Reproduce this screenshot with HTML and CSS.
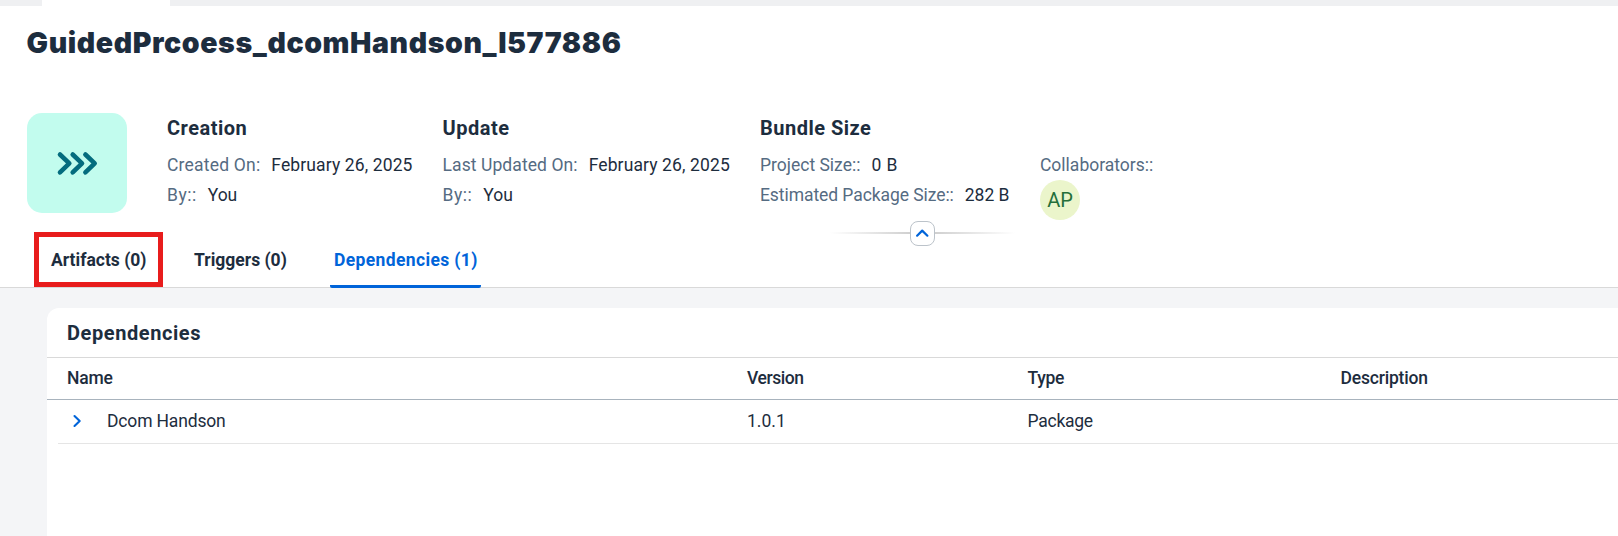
FILE: index.html
```
<!DOCTYPE html>
<html lang="en">
<head>
<meta charset="utf-8">
<title>GuidedPrcoess_dcomHandson_I577886</title>
<link rel="stylesheet" href="styles.css">
</head>
<body>
<div class="top-strip"><div class="top-tab"></div></div>
<header class="page-header">
  <h1 class="title">GuidedPrcoess_dcomHandson_I577886</h1>
  <div class="summary">
    <div class="project-icon">
      <svg width="100" height="100" viewBox="0 0 100 100" fill="none" stroke="#046c7e" stroke-width="4.6" stroke-linecap="round" stroke-linejoin="round"><path d="M33 41.5 42.3 50.3 33 59.3M45.7 41.5 55 50.3 45.7 59.3M58.4 41.5 67.7 50.3 58.4 59.3"/></svg>
    </div>
    <section class="facts creation">
      <h2>Creation</h2>
      <p><span class="label created">Created On:</span><span class="date">February 26, 2025</span></p>
      <p><span class="label by">By::</span><span>You</span></p>
    </section>
    <section class="facts update">
      <h2>Update</h2>
      <p><span class="label updated">Last Updated On:</span><span class="date">February 26, 2025</span></p>
      <p><span class="label by">By::</span><span>You</span></p>
    </section>
    <section class="facts size">
      <h2>Bundle Size</h2>
      <p><span class="label">Project Size::</span><span class="bytes">0 B</span></p>
      <p><span class="label estimate">Estimated Package Size::</span><span>282 B</span></p>
    </section>
    <section class="facts people">
      <p><span class="label">Collaborators::</span></p>
      <div class="avatar">AP</div>
    </section>
  </div>
  <nav class="tabs">
    <a class="tab marked">Artifacts (0)</a>
    <a class="tab triggers">Triggers (0)</a>
    <a class="tab active">Dependencies (1)</a>
  </nav>
  <div class="collapse">
    <span class="ray left"></span>
    <button class="collapse-button" aria-label="Collapse header"><svg width="23" height="23" viewBox="0 0 23 23" fill="none" stroke="#0064d9" stroke-width="2.2" stroke-linecap="round" stroke-linejoin="round"><path d="M6.1 13.7 11.2 8.6 16.4 13.7"/></svg></button>
    <span class="ray right"></span>
  </div>
</header>
<main class="content">
  <section class="card">
    <h2 class="card-title">Dependencies</h2>
    <div class="row head"><span>Name</span><span class="version">Version</span><span class="type">Type</span><span>Description</span></div>
    <div class="row item">
      <span class="name"><svg width="10" height="14" viewBox="0 0 10 14" fill="none" stroke="#0064d9" stroke-width="2.1" stroke-linecap="round" stroke-linejoin="round"><path d="M1.5 2 6.7 7 1.5 12"/></svg><span>Dcom Handson</span></span>
      <span>1.0.1</span><span class="package">Package</span><span></span>
    </div>
  </section>
</main>
</body>
</html>
```
FILE: styles.css
```
* { box-sizing: border-box; }
body { margin: 0; height: 536px; overflow: hidden; display: flex; flex-direction: column; background: #fff; color: #1d2d3e; font-family: Roboto, "Liberation Sans", sans-serif; font-size: 17.5px; }
h1, h2, p { margin: 0; }
.top-strip { height: 6px; flex: none; padding-left: 42px; background: #eff0f2; }
.top-tab { width: 128px; height: 6px; background: #fff; }
.page-header { position: relative; flex: none; height: 282px; display: flex; flex-direction: column; border-bottom: 1px solid #d9d9d9; }
.title { padding: 19px 0 0 26.6px; height: 107px; font: 900 28.5px/36px Inter, sans-serif; letter-spacing: 0.59px; white-space: nowrap; }
.summary { display: flex; height: 119px; padding-left: 27px; white-space: nowrap; }
.project-icon { flex: none; width: 100px; height: 100px; border-radius: 15px; background: #c2fcee; }
.facts { flex: none; }
.facts h2 { height: 37px; font-size: 20px; line-height: 30px; font-weight: 700; letter-spacing: 0.5px; }
.facts p { display: flex; gap: 11px; height: 30px; line-height: 30px; }
.label { color: #556b82; }
.created { letter-spacing: 0.2px; }
.updated { letter-spacing: 0.08px; }
.by { letter-spacing: 0.5px; }
.estimate { letter-spacing: -0.07px; }
.date { letter-spacing: 0.12px; }
.bytes { letter-spacing: 0.5px; }
.creation { margin-left: 40px; width: 275.6px; }
.update { width: 317.4px; }
.size { width: 280px; }
.people { padding-top: 37px; }
.avatar { width: 40px; height: 40px; border-radius: 50%; background: #ebf5cb; color: #256f3a; font-size: 20px; line-height: 40px; text-align: center; }
.tabs { display: flex; padding-left: 34px; height: 55px; font-weight: 700; white-space: nowrap; }
.tab { height: 55px; line-height: 56px; }
.marked { width: 129px; padding-left: 12px; border: 5px solid #e81c1c; line-height: 46px; }
.triggers { width: 167px; padding-left: 31px; }
.active { width: 151px; height: 56px; padding-left: 4px; border-bottom: 3px solid #0064d9; border-radius: 0 0 2px 2px; color: #0064d9; letter-spacing: 0.36px; z-index: 1; }
.collapse { position: absolute; left: 830px; top: 215px; display: flex; align-items: center; }
.ray { height: 2px; width: 80px; margin-bottom: 2px; background: linear-gradient(90deg, transparent, #d0d0d0); }
.ray.right { background: linear-gradient(270deg, transparent, #d0d0d0); }
.collapse-button { width: 25px; height: 25px; padding: 0; border: 1px solid #bcc3ca; border-radius: 8px; background: #fff; }
.collapse-button svg { display: block; }
.content { flex: 1; padding: 20px 0 0 47px; background: #f4f5f7; }
.card { height: 100%; background: #fff; border-radius: 12px 0 0 0; }
.card-title { height: 50px; padding-left: 20px; border-bottom: 1px solid #d9d9d9; font-size: 20px; line-height: 50px; letter-spacing: 0.58px; }
.row { display: grid; grid-template-columns: 680px 280.5px 313px 1fr; }
.head { height: 42px; padding-left: 20px; border-bottom: 1px solid #a8b3bd; font-weight: 500; line-height: 40px; letter-spacing: -0.2px; }
.version { letter-spacing: -0.45px; }
.type { letter-spacing: -0.3px; }
.item { height: 44px; margin-left: 11px; padding-left: 9px; border-bottom: 1px solid #e5e5e5; line-height: 42px; }
.name { display: flex; align-items: center; gap: 24px; height: 42px; padding-left: 6px; letter-spacing: -0.16px; }
.package { letter-spacing: -0.25px; }
```
